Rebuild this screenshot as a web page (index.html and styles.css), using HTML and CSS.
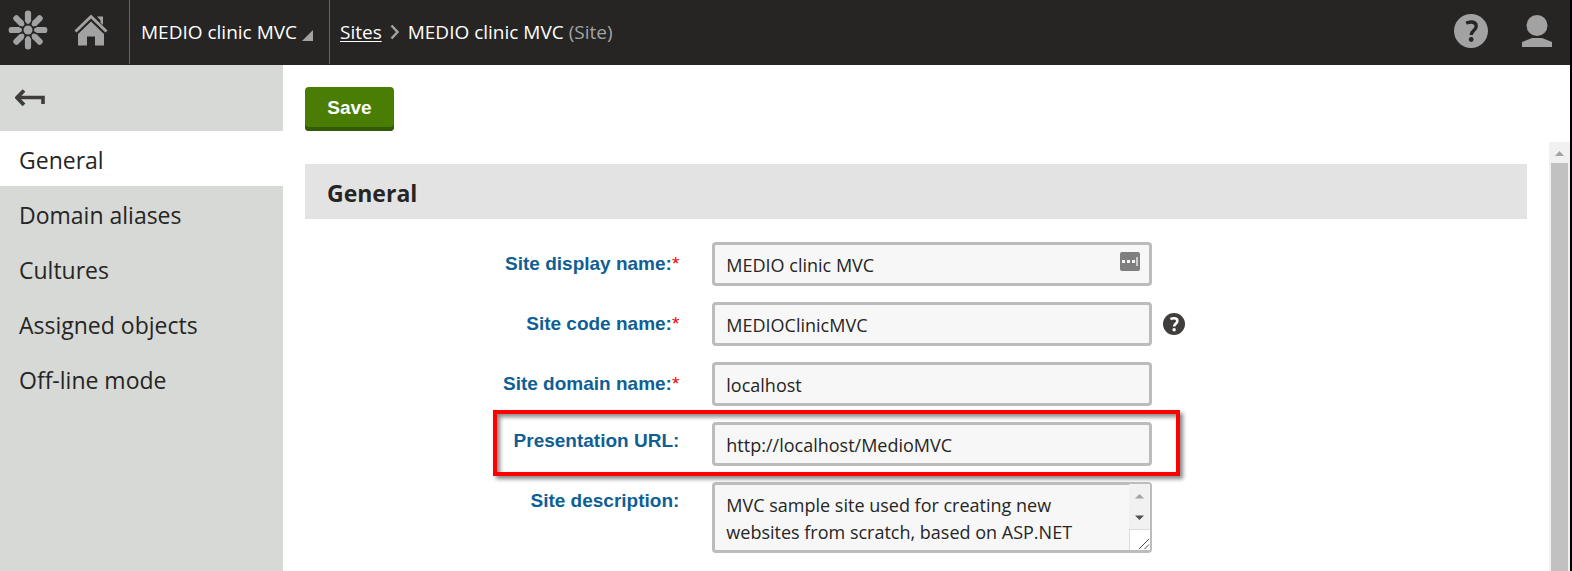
FILE: index.html
```html
<!DOCTYPE html>
<html lang="en">
<head>
<meta charset="utf-8">
<title>MEDIO clinic MVC (Site)</title>
<link rel="stylesheet" href="styles.css">
</head>
<body>
<header class="topbar">
  <a class="logo" href="#" aria-label="Application list">
    <svg width="40" height="40" viewBox="0 0 40 40" fill="currentColor">
      <circle cx="20" cy="20" r="4.500"/>
      <g>
        <path id="petal" d="M18.600 13.600 16.900 11V3.200Q16.900.6 20 .6T23.100 3.200V11L21.400 13.600Q20 14.400 18.600 13.600Z"/>
        <use href="#petal" transform="rotate(45 20 20)"/>
        <use href="#petal" transform="rotate(90 20 20)"/>
        <use href="#petal" transform="rotate(135 20 20)"/>
        <use href="#petal" transform="rotate(180 20 20)"/>
        <use href="#petal" transform="rotate(225 20 20)"/>
        <use href="#petal" transform="rotate(270 20 20)"/>
        <use href="#petal" transform="rotate(315 20 20)"/>
      </g>
    </svg>
  </a>
  <a class="home" href="#" aria-label="Dashboard">
    <svg width="34" height="32" viewBox="0 0 34 32" fill="currentColor">
      <path d="M1.500 17.500 17 2.500l15.500 15" fill="none" stroke="currentColor" stroke-width="3"/>
      <path d="M17 7.500 30 20v11.500h-9v-9h-8v9H4V20Z"/>
      <path d="M23 2.500h6v8.500l-2.500-2.500V6.200Z"/>
    </svg>
  </a>
  <button class="site-selector" type="button">MEDIO clinic MVC
    <svg width="11" height="11" viewBox="0 0 11 11"><path d="M11 0v11H0Z" fill="#a3a2a2"/></svg>
  </button>
  <nav class="breadcrumb" aria-label="Breadcrumb">
    <a href="#">Sites</a>
    <svg width="10" height="16" viewBox="0 0 10 16"><path d="m1.500 1.500 6 6.500-6 6.500" fill="none" stroke="#a3a2a2" stroke-width="2.500"/></svg>
    <span>MEDIO clinic MVC <span class="muted">(Site)</span></span>
  </nav>
  <div class="tools">
    <button type="button" aria-label="Help">
      <svg width="34" height="34" viewBox="0 0 34 34">
        <circle cx="17" cy="17" r="17" fill="currentColor"/>
        <path d="M12.200 9.300Q14.500 8 17 8c3.300 0 5.200 1.600 5.200 4.200 0 4.400-5 4.300-5 8.800" fill="none" stroke="#262524" stroke-width="3.400"/>
        <circle cx="17.200" cy="25.500" r="2.400" fill="#262524"/>
      </svg>
    </button>
    <button type="button" aria-label="User menu">
      <svg width="30" height="32" viewBox="0 0 30 32" fill="currentColor">
        <circle cx="15" cy="10.500" r="10.500"/>
        <path d="M10 23h10l10 4v5H0v-5Z"/>
      </svg>
    </button>
  </div>
</header>
<div class="workspace">
  <aside class="sidebar">
    <a class="back" href="#" aria-label="Back">
      <svg width="30" height="18" viewBox="0 0 30 18" fill="none" stroke="#403e3d">
        <path d="M9 1.500 2 8.700l7 7.200" stroke-width="3.800"/>
        <path d="M2 8.500h26v6.500" stroke-width="3.600"/>
      </svg>
    </a>
    <nav class="tabs" aria-label="Site settings">
      <a class="active" href="#" aria-current="page">General</a>
      <a href="#">Domain aliases</a>
      <a href="#">Cultures</a>
      <a href="#">Assigned objects</a>
      <a href="#">Off-line mode</a>
    </nav>
  </aside>
  <main class="content">
    <div class="actions"><button class="save" type="submit" form="site-form">Save</button></div>
    <div class="scroll-area">
      <form class="form" id="site-form">
        <h1>General</h1>
        <div class="row">
          <label class="required" for="display-name">Site display name:<span>*</span></label>
          <div class="field">
            <div class="control">
              <input id="display-name" type="text" value="MEDIO clinic MVC">
              <svg class="autofill" width="20" height="19" viewBox="0 0 20 19">
                <rect width="20" height="19" rx="2" fill="#7f7f7f"/>
                <path d="M2 8h3v3H2zM7 8h3v3H7zM12 8h3v3h-3z" fill="#f4f4f4"/>
                <path d="M16 5h2v9h-2z" fill="#ccc"/>
              </svg>
            </div>
          </div>
        </div>
        <div class="row">
          <label class="required" for="code-name">Site code name:<span>*</span></label>
          <div class="field">
            <div class="control"><input id="code-name" type="text" value="MEDIOClinicMVC"></div>
            <button class="hint" type="button" aria-label="Code name help">
              <svg width="22" height="22" viewBox="0 0 34 34">
                <circle cx="17" cy="17" r="17" fill="#403e3d"/>
                <path d="M11.500 9.500Q14 8 17 8c3.300 0 5.200 1.600 5.200 4.200 0 4.400-5 4.300-5 8.800" fill="none" stroke="#fff" stroke-width="4"/>
                <circle cx="17.200" cy="25.800" r="2.700" fill="#fff"/>
              </svg>
            </button>
          </div>
        </div>
        <div class="row">
          <label class="required" for="domain-name">Site domain name:<span>*</span></label>
          <div class="field"><div class="control"><input id="domain-name" type="text" value="localhost"></div></div>
        </div>
        <div class="row highlighted">
          <label for="presentation-url">Presentation URL:</label>
          <div class="field"><div class="control"><input id="presentation-url" type="text" value="http://localhost/MedioMVC"></div></div>
        </div>
        <div class="row">
          <label for="description">Site description:</label>
          <div class="field">
            <div class="control">
              <textarea id="description" rows="2">MVC sample site used for creating new websites from scratch, based on ASP.NET</textarea>
              <div class="mini-scroll" aria-hidden="true">
                <svg width="21" height="45" viewBox="0 0 21 45"><path d="M6 14.500h9L10.500 10Z" fill="#a3a3a3"/><path d="M6 31.500h9L10.500 36Z" fill="#505050"/></svg>
                <svg class="grip" width="20" height="20" viewBox="0 0 20 20" stroke="#505050"><path d="m9 19 10-10M14.500 19l4.500-4.500"/></svg>
              </div>
            </div>
          </div>
        </div>
      </form>
      <div class="scrollbar" aria-hidden="true">
        <svg width="21" height="21" viewBox="0 0 21 21"><path d="M6 14h9L10.500 9Z" fill="#a3a3a3"/></svg>
        <div class="thumb"></div>
      </div>
    </div>
  </main>
</div>
</body>
</html>
```
FILE: styles.css
```css
*, *::after { box-sizing: border-box; }

body {
  margin: 0;
  height: 100vh;
  display: flex;
  flex-direction: column;
  overflow: hidden;
  border-right: 2px solid #000;
  background: #fff;
  color: #262524;
  font-family: "Open Sans", "Noto Sans", sans-serif;
  font-size: 18px;
}

button, input, textarea { font: inherit; color: inherit; }
button { border: 0; padding: 0; background: none; cursor: pointer; }
svg { display: block; flex: none; }

.topbar {
  display: flex;
  flex: none;
  height: 65px;
  padding-bottom: 1px;
  background: #262524;
  color: #fff;
  font-size: 19px;
}
.logo, .home { display: flex; align-items: center; color: #a3a2a2; }
.logo { padding: 0 26px 4px 8px; }
.home { padding: 0 21px 4px 0; }
.site-selector {
  display: flex;
  align-items: center;
  gap: 5px;
  width: 201px;
  padding-left: 11px;
  border: solid #696867;
  border-width: 0 1px;
}
.site-selector svg { margin-top: 6px; }
.breadcrumb { display: flex; align-items: center; gap: 8px; padding-left: 10px; }
.breadcrumb a { color: #fff; text-underline-offset: 2px; }
.breadcrumb .muted { color: #a3a2a2; }
.tools {
  display: flex;
  align-items: center;
  gap: 34px;
  margin-left: auto;
  padding: 0 18px 2px 0;
}
.tools button { color: #a3a2a2; }

.workspace { display: flex; flex: 1; min-height: 0; }
.sidebar { flex: none; width: 283px; background: #d6d9d6; }
.back { display: flex; align-items: center; height: 66px; padding-left: 15px; }
.tabs a {
  display: block;
  padding: 3px 0 0 19px;
  color: inherit;
  font-size: 23px;
  line-height: 52px;
  text-decoration: none;
}
.tabs .active { background: #fff; }

.content { display: flex; flex: 1; flex-direction: column; min-width: 0; padding-left: 22px; }
.actions { flex: none; height: 77px; padding-top: 22px; }
.save {
  width: 89px;
  height: 44px;
  padding-bottom: 2px;
  border-radius: 4px;
  background: #497d04;
  box-shadow: inset 0 -4px #325903;
  color: #fff;
  font: bold 19px "Liberation Sans", Arial, sans-serif;
}
.scroll-area { display: flex; flex: 1; min-height: 0; }
.form {
  display: flex;
  flex: 1;
  flex-direction: column;
  gap: 16px;
  padding: 22px 22px 0 0;
  overflow: hidden;
}
h1 {
  margin: 0 0 7px;
  padding: 3px 0 0 22px;
  background: #e3e3e3;
  font-size: 23px;
  line-height: 52px;
}
.row { position: relative; display: grid; grid-template-columns: 1fr 2fr; }
.row label {
  padding: 7px 33px 0 0;
  color: #0f5f95;
  font: bold 19px/24px "Liberation Sans", Arial, sans-serif;
  text-align: right;
}
.row .required { padding-top: 10px; }
.required span { color: #f00; font-weight: normal; }
.field { display: flex; align-items: center; gap: 11px; }
.control { position: relative; width: 440px; }
input, textarea {
  display: block;
  width: 100%;
  height: 44px;
  margin: 0;
  padding: 2px 11px 0;
  border: 3px solid #bdbbbb;
  border-radius: 4px;
  background: #f7f7f7;
  outline: 0;
}
textarea {
  height: 71px;
  padding: 7px 30px 0 11px;
  line-height: 27px;
  overflow: hidden;
  resize: none;
}
.autofill { position: absolute; top: 10px; right: 12px; }
.mini-scroll { position: absolute; top: 2px; right: 2px; width: 21px; background: #f1f1f1; }
.grip { width: 21px; height: 21px; border: solid #dcdcdc; border-width: 1px 0 0 1px; background: #fff; }

.highlighted::after {
  content: "";
  position: absolute;
  top: -12px;
  bottom: -10px;
  left: 188px;
  width: 687px;
  border: 4px solid #f00;
  box-shadow: 3px 3px 4px #0007, inset 3px 3px 4px #0007;
  pointer-events: none;
}

.scrollbar { display: flex; flex: none; flex-direction: column; width: 21px; background: #f1f1f1; }
.thumb { flex: 1; margin: 0 2px; background: #c1c1c1; }
```
